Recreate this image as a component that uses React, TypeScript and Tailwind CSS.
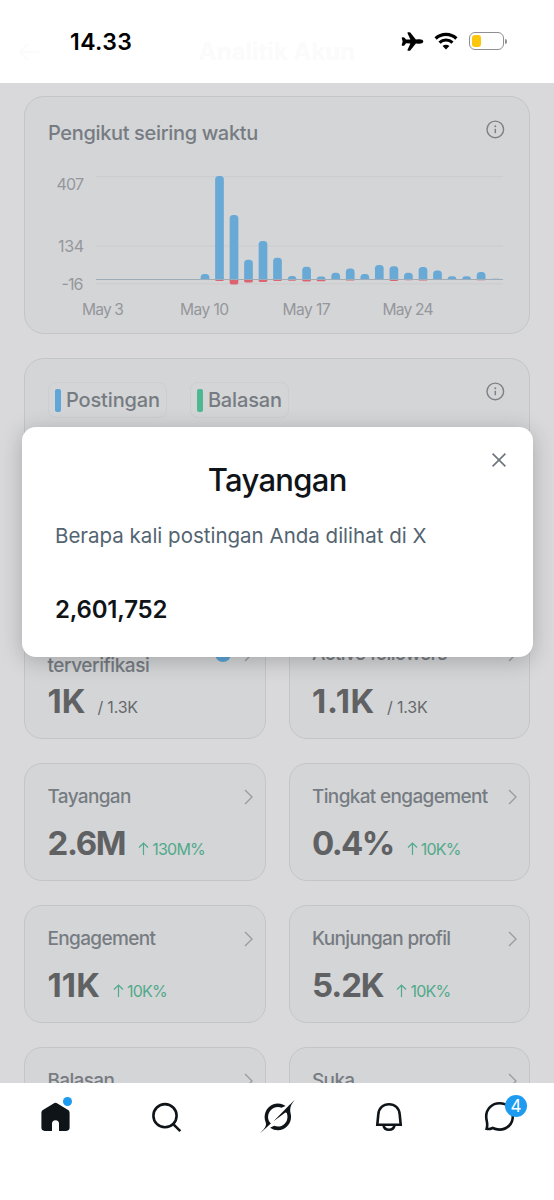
import React from "react";
import { IoAirplane } from "react-icons/io5";

interface DayBar {
  x: number;
  top: number;
  lost: number;
}

interface Stat {
  label: string;
  value: string;
  change?: string;
  total?: string;
  verified?: boolean;
  tall?: boolean;
  valueClass?: string;
}

const BASELINE = 103.5;

// top = y of the gained bar, lost = depth under the baseline
const BARS: DayBar[] = [
  { x: 205, top: 98, lost: 0 },
  { x: 219.5, top: 0, lost: 1.4 },
  { x: 234, top: 39, lost: 5 },
  { x: 248.5, top: 83.7, lost: 3 },
  { x: 263, top: 65, lost: 2.4 },
  { x: 277.5, top: 81.7, lost: 1.5 },
  { x: 292.1, top: 100, lost: 1.2 },
  { x: 306.6, top: 90.8, lost: 2 },
  { x: 321.1, top: 100.6, lost: 1.8 },
  { x: 335.7, top: 96.8, lost: 0 },
  { x: 350.2, top: 92.6, lost: 1 },
  { x: 364.8, top: 98, lost: 0 },
  { x: 379.3, top: 89, lost: 0 },
  { x: 393.9, top: 90.3, lost: 1.4 },
  { x: 408.4, top: 96.8, lost: 0.7 },
  { x: 423, top: 91, lost: 1 },
  { x: 437.5, top: 94.4, lost: 0 },
  { x: 452, top: 100.2, lost: 0 },
  { x: 466.6, top: 100.2, lost: 0 },
  { x: 481.1, top: 96, lost: 0.8 },
  { x: 495.7, top: 102.8, lost: 0 },
];

const STATS: Stat[] = [
  { label: "Pengikut terverifikasi", value: "1K", total: "1.3K", verified: true, tall: true },
  { label: "Active followers", value: "1.1K", total: "1.3K", tall: true, valueClass: "tracking-[0.7px]" },
  { label: "Tayangan", value: "2.6M", change: "130M%", valueClass: "tracking-[-1.3px]" },
  { label: "Tingkat engagement", value: "0.4%", change: "10K%", valueClass: "tracking-[-1.6px]" },
  { label: "Engagement", value: "11K", change: "10K%", valueClass: "tracking-[0.1px]" },
  { label: "Kunjungan profil", value: "5.2K", change: "10K%", valueClass: "tracking-[-1.1px]" },
  { label: "Balasan", value: "1.2K", change: "10K%" },
  { label: "Suka", value: "6.4K", change: "10K%" },
];

function InfoIcon() {
  return (
    <svg width="20" height="20" viewBox="0 0 20 20" fill="none" className="text-[#7c8287]">
      <circle cx="10.3" cy="10.4" r="8.3" stroke="currentColor" strokeWidth="1.4" />
      <circle cx="10.3" cy="7.3" r="1" fill="currentColor" />
      <path d="M10.3 9.8v4.4" stroke="currentColor" strokeWidth="1.5" />
    </svg>
  );
}

function Chevron() {
  return (
    <svg width="9" height="16" viewBox="0 0 9 16" fill="none" className="shrink-0 text-[#989da1]">
      <path d="M1 1l7 7-7 7" stroke="currentColor" strokeWidth="1.4" />
    </svg>
  );
}

function StatusBar() {
  return (
    <header className="h-[83px] shrink-0 bg-white relative flex items-start justify-between pl-[70px] pr-[47.5px] pt-[26px]">
      <div className="absolute inset-x-0 top-[38px] h-7 flex items-center justify-center text-[#fbfbfb] text-[24px] font-bold">
        <svg width="20" height="18" viewBox="0 0 20 18" fill="none" className="absolute left-[19px]">
          <path d="M9 1L1 9l8 8M1 9h19" stroke="currentColor" strokeWidth="2" />
        </svg>
        Analitik Akun
      </div>
      <span className="relative top-px text-[23px] leading-[30px] tracking-[0.4px] font-semibold text-black">14.33</span>
      <div className="relative flex items-center h-[30px]">
        <IoAirplane className="w-[23px] h-[23px] text-black" />
        <svg width="24" height="18" viewBox="0 0 24 18" className="ml-[10px] text-black">
          <path d="M1.6 6.5a15 15 0 0 1 20.8 0" fill="none" stroke="currentColor" strokeWidth="3.2" />
          <path d="M5.5 10.7a9.3 9.3 0 0 1 13 0" fill="none" stroke="currentColor" strokeWidth="3.1" />
          <path d="M12 17.4l-3.4-3.4a4.9 4.9 0 0 1 6.8 0z" fill="currentColor" />
        </svg>
        <div className="ml-[11px] w-[35px] h-[18px] rounded-[6px] border border-[#8f8f8f] p-[2px]">
          <div className="w-[9px] h-full rounded-[3px] bg-[#fcc60a]" />
        </div>
        <div className="ml-[1px] w-[2px] h-[5px] rounded-r-full bg-[#8f8f8f]" />
      </div>
    </header>
  );
}

function FollowersChart() {
  return (
    <svg width="480" height="160" viewBox="25 -4 480 160" className="block">
      <g stroke="#cbcccf" strokeWidth="1">
        <path d="M96 .7h407M96 69.9h407M96 107.8h407" />
      </g>
      {BARS.map((b) => {
        const r = Math.min(3.5, BASELINE - b.top);
        const l = b.x - 4.35;
        const right = b.x + 4.35;
        return (
          <g key={b.x}>
            <path
              d={`M${l} ${BASELINE}V${b.top + r}q0 ${-r} ${r} ${-r}H${right - r}q${r} 0 ${r} ${r}V${BASELINE}z`}
              fill="#69a9d6"
            />
            {b.lost > 0 && (
              <path
                d={`M${l} ${BASELINE}h8.7v${b.lost * 0.5}q0 ${b.lost * 0.5} -2 ${b.lost * 0.5}h-4.7q-2 0 -2 ${-b.lost * 0.5}z`}
                fill="#db6470"
              />
            )}
          </g>
        );
      })}
      <path d="M96 103.5h407" stroke="#9fabb5" strokeWidth="1.2" />
      <g fill="#94979b" fontSize="16">
        <text x="56.5" y="13.5" textLength="27.5">407</text>
        <text x="58" y="75.5" textLength="26">134</text>
        <text x="61.5" y="113.5" textLength="22">-16</text>
      </g>
      <g fill="#94979b" fontSize="15.6">
        <text x="82" y="139" textLength="42">May 3</text>
        <text x="180" y="139" textLength="49">May 10</text>
        <text x="282.5" y="139" textLength="48">May 17</text>
        <text x="382.5" y="139" textLength="51">May 24</text>
      </g>
    </svg>
  );
}

function LegendChip({ color, label }: { color: string; label: string }) {
  return (
    <div className="h-9 flex items-center gap-[5px] rounded-lg border border-[#cdced0] px-[6px]">
      <span className={`w-[6px] h-[23px] rounded-[2px] ${color}`} />
      <span className="text-[20px] tracking-[-0.15px] font-medium text-[#767c82]">{label}</span>
    </div>
  );
}

function StatCard({ stat }: { stat: Stat }) {
  return (
    <div
      className={`${stat.tall ? "h-[142px] pt-8" : "h-[118px] pt-[21px]"} rounded-[18px] border border-[#c3c5c8] bg-[#d4d5d7] pl-[22.5px] pr-3`}
    >
      <div
        className={`${stat.tall ? "h-12" : "h-6"} flex items-center text-[19px] leading-6 tracking-[-0.66px] font-medium text-[#767c82]`}
      >
        <span className={stat.verified ? "w-[120px] tracking-[-0.45px]" : "whitespace-nowrap"}>{stat.label}</span>
        {stat.verified && <span className="ml-auto mr-[13px] w-4 h-4 rounded-full bg-[#5aa5d8]" />}
        <span className={stat.verified ? "" : "ml-auto"}>
          <Chevron />
        </span>
      </div>
      <div className={`${stat.tall ? "mt-[5px]" : "mt-4"} h-9 flex items-baseline leading-9`}>
        <span className={`text-[33px] font-bold text-[#5f6163] ${stat.valueClass ?? ""}`}>{stat.value}</span>
        {stat.total && <span className="ml-3 text-[16px] tracking-[-0.2px] text-[#66686b]">/ {stat.total}</span>}
        {stat.change && (
          <span className="ml-[13px] flex items-baseline text-[16px] tracking-[-0.8px] text-[#52a98a]">
            <svg width="11" height="13" viewBox="0 0 11 13" fill="none" className="mr-[3px]">
              <path d="M5.5 13V1M1 5.5L5.5 1 10 5.5" stroke="currentColor" strokeWidth="1.2" />
            </svg>
            {stat.change}
          </span>
        )}
      </div>
    </div>
  );
}

function MetricModal() {
  return (
    <div className="absolute left-[21.5px] top-[343.5px] w-[511.5px] h-[230.5px] rounded-[14px] bg-white shadow-[0_4px_22px_rgba(0,0,0,0.22)] px-[33.5px] pt-[33px]">
      <button className="absolute right-[27px] top-[26px] text-[#6c757d]">
        <svg width="14" height="14" viewBox="0 0 14 14" fill="none">
          <path d="M.6.6l12.8 12.8M13.4.6L.6 13.4" stroke="currentColor" strokeWidth="1.6" />
        </svg>
      </button>
      <h2 className="text-center text-[31px] leading-10 tracking-[-0.7px] font-medium text-[#0f1419]">Tayangan</h2>
      <p className="mt-[22px] text-[20.5px] leading-7 text-[#536471] whitespace-nowrap">
        Berapa kali postingan Anda dilihat di X
      </p>
      <p className="mt-[44px] text-[24px] leading-8 tracking-[-0.2px] font-semibold text-[#0f1419]">2,601,752</p>
    </div>
  );
}

function BottomNav() {
  return (
    <nav className="h-[117px] shrink-0 bg-white flex justify-between items-start px-[37px] pt-4 text-[#0f1419]">
      <div className="relative w-9 h-9">
        <svg width="36" height="36" viewBox="0 0 36 36" fill="currentColor">
          <path d="M16.6 4.5a3.4 3.4 0 0 1 3.8 0l10.3 6.3c1.2.7 1.9 1.7 1.9 3.1v14.7a3.3 3.3 0 0 1-3.3 3.3H22v-7.2a3.5 3.5 0 0 0-7 0v7.2H7.7a3.3 3.3 0 0 1-3.3-3.3V13.9c0-1.4.7-2.4 1.9-3.1z" />
        </svg>
        <span className="absolute left-[25.5px] top-[-2.5px] w-[9px] h-[9px] rounded-full bg-[#1d9bf0]" />
      </div>
      <svg width="36" height="36" viewBox="0 0 36 36" fill="none" stroke="currentColor" strokeWidth="2.6">
        <circle cx="17" cy="16.7" r="11.6" />
        <path d="M25 24.9l7.3 7.3" />
      </svg>
      <svg width="36" height="35" viewBox="-0.6 -0.4 33.6 32.6" fill="currentColor">
        <path d="M12.745 20.54l10.97-8.19c.539-.4 1.307-.244 1.564.38 1.349 3.288.746 7.241-1.938 9.955-2.683 2.714-6.417 3.31-9.83 1.954l-3.728 1.745c5.347 3.697 11.84 2.782 15.898-1.324 3.219-3.255 4.216-7.692 3.284-11.693l.008.009c-1.351-5.878.332-8.227 3.782-13.031L33 0l-4.54 4.59v-.014L12.743 20.544m-2.263 1.987c-3.837-3.707-3.175-9.446.1-12.755 2.42-2.449 6.388-3.448 9.852-1.979l3.72-1.737c-.67-.49-1.53-1.017-2.515-1.387-4.455-1.854-9.789-.931-13.41 2.728-3.483 3.523-4.579 8.94-2.697 13.561 1.405 3.454-.899 5.898-3.22 8.364C1.49 30.2.666 31.074 0 32l10.478-9.466" />
      </svg>
      <svg width="36" height="36" viewBox="-1 0 36 36" fill="none" stroke="currentColor" strokeWidth="2.6">
        <path d="M6.3 25.7l1-10.2C7.7 9 12.3 5.2 18 5.2S28.3 9 28.7 15.5l1 10.2z" />
        <path d="M12.4 26c.6 3.3 2.7 4.8 5.6 4.8s5-1.5 5.6-4.8" />
      </svg>
      <div className="relative w-9 h-9">
        <svg width="36" height="36" viewBox="0 0 36 36" fill="none" stroke="currentColor" strokeWidth="2.6">
          <path d="M18.5 4.3c-7.7 0-13.3 5.900-13.3 13.200 0 5 2.200 7 .4 12.300 2.500.8 4.300 0 6.100-.8 2 1 4.300 1.600 6.800 1.600 7.700 0 13.300-5.900 13.300-13.200S26.200 4.300 18.500 4.300z" />
        </svg>
        <span className="absolute left-[24px] top-[-4px] w-[22px] h-[22px] rounded-full bg-[#1d9bf0] text-white text-[17px] leading-[22px] text-center">
          4
        </span>
      </div>
    </nav>
  );
}

export default function App() {
  return (
    <div className="w-[554px] h-[1200px] flex flex-col overflow-hidden bg-white font-['Inter',sans-serif]">
      <StatusBar />
      <main className="relative h-[1000px] shrink-0 overflow-hidden bg-[#d9d9db] px-6 pt-[13px]">
        <section className="h-[238px] rounded-[20px] border border-[#c3c5c8] bg-[#d4d5d7]">
          <div className="h-[75px] flex justify-between pl-[23px] pr-[24px] pt-[22px]">
            <h2 className="text-[20px] leading-[28px] tracking-[-0.35px] font-medium text-[#767c82]">
              Pengikut seiring waktu
            </h2>
            <InfoIcon />
          </div>
          <FollowersChart />
        </section>

        <section className="mt-6 h-[215px] rounded-[20px] border border-[#c3c5c8] bg-[#d4d5d7] flex justify-between items-start pl-[23px] pr-[24px] pt-[22px]">
          <div className="mt-px flex gap-[23px]">
            <LegendChip color="bg-[#60a6d8]" label="Postingan" />
            <LegendChip color="bg-[#4fb892]" label="Balasan" />
          </div>
          <InfoIcon />
        </section>

        <div className="mt-6 grid grid-cols-2 gap-x-[23px] gap-y-6">
          {STATS.map((s) => (
            <StatCard key={s.label} stat={s} />
          ))}
        </div>

        <MetricModal />
      </main>
      <BottomNav />
    </div>
  );
}
